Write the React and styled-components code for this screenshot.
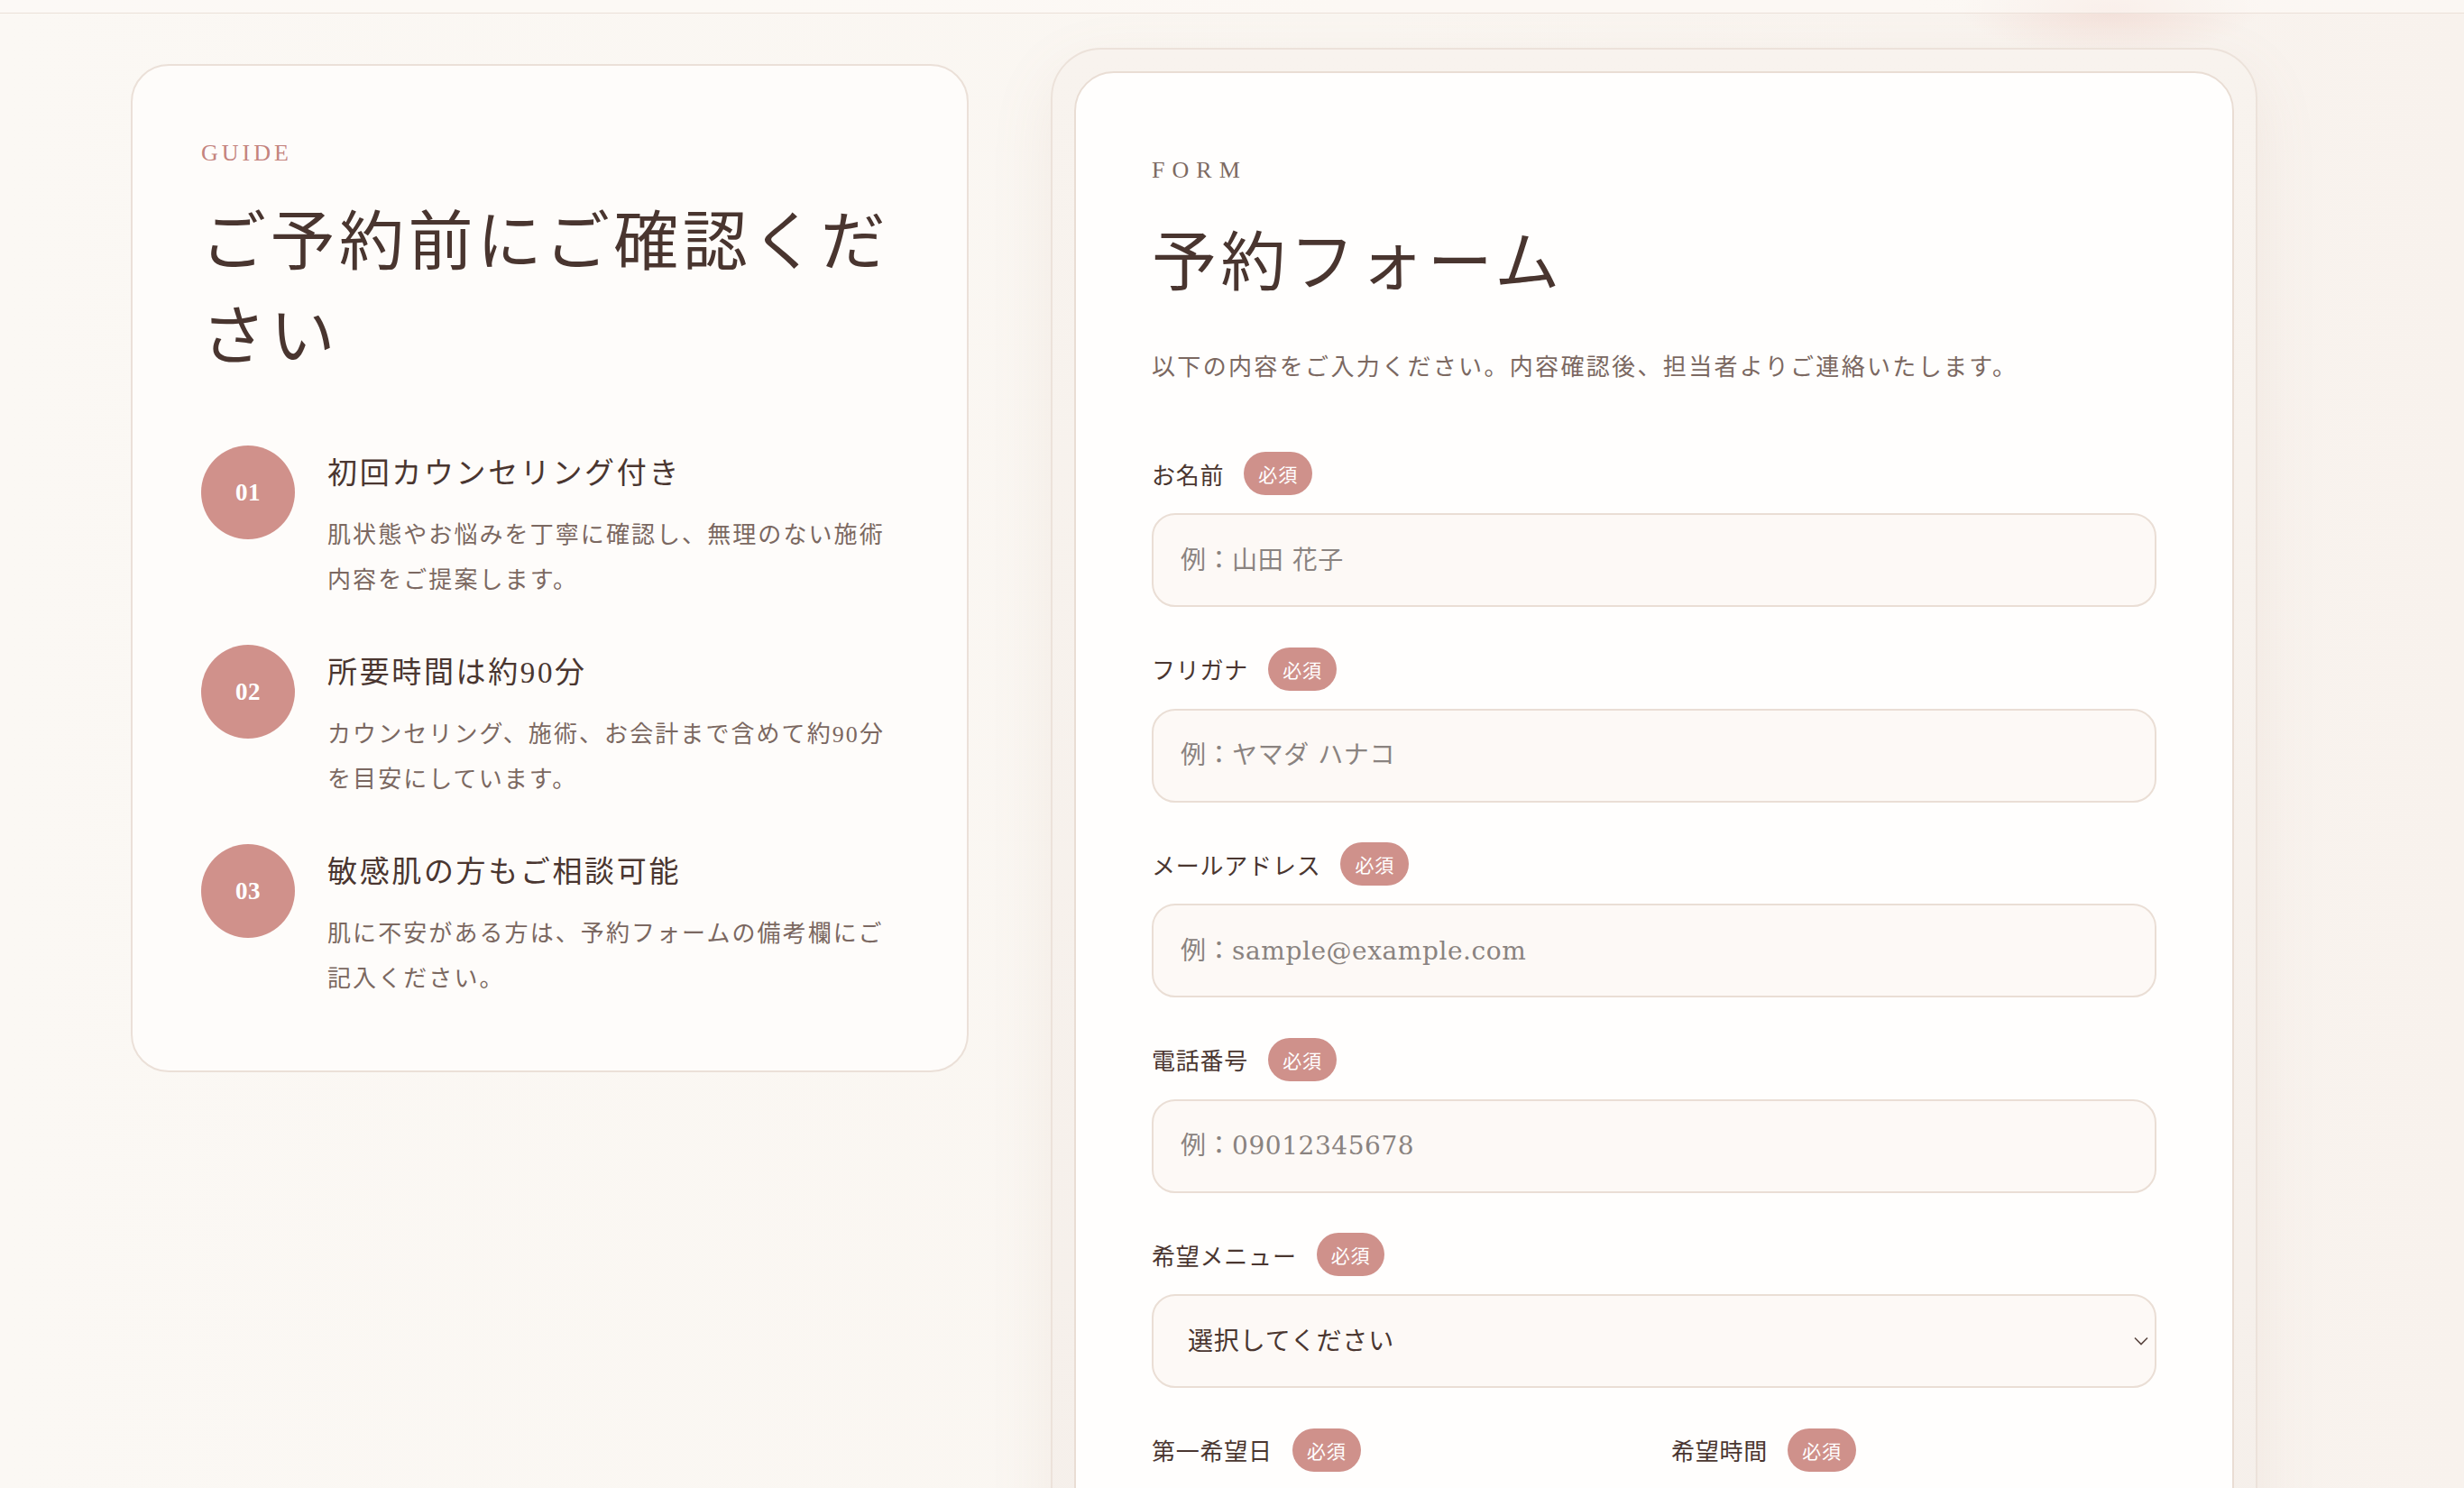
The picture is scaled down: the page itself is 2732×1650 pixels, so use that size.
import React from 'react';
import styled, { createGlobalStyle } from 'styled-components';

const GlobalStyle = createGlobalStyle`
  html, body {
    margin: 0;
    padding: 0;
  }

  * {
    box-sizing: border-box;
  }

  body {
    min-height: 100vh;
    background:
      radial-gradient(ellipse 220px 70px at 2340px 10px, rgba(238, 205, 196, 0.5), rgba(238, 205, 196, 0) 75%),
      linear-gradient(90deg, #fbf8f4 0%, #faf6f1 55%, #f8f2ed 100%);
    font-family: "Liberation Serif", "Noto Sans CJK JP", serif;
    color: #4a3630;
  }
`;

/** layout **/
const TopBar = styled.header`
  height: 15px;
  background: rgba(253, 250, 246, 0.6);
  border-bottom: 1px solid #ebe0d8;
`;

const Main = styled.main`
  display: grid;
  grid-template-columns: 929px 1338px;
  column-gap: 91px;
  align-items: start;
  padding: 38px 0 0 145px;
`;

/** guide card **/
const GuideCard = styled.section`
  margin-top: 18px;
  padding: 79px 76px 76px;
  background: #fefcfa;
  border: 2px solid #ebe0d8;
  border-radius: 42px;
`;

const Eyebrow = styled.p`
  margin: 0;
  font-family: "Liberation Serif", serif;
  font-size: 26px;
  line-height: 36px;
  letter-spacing: ${(p) => p.$spacing};
  color: ${(p) => p.$tone};
`;

const Heading = styled.h1`
  margin: ${(p) => p.$gap || '29px'} 0 0;
  font-size: 72px;
  font-weight: 400;
  line-height: 105px;
  letter-spacing: 0.062em;
  color: #49352f;
`;

const Steps = styled.ol`
  list-style: none;
  margin: 67px 0 0;
  padding: 0;
  display: flex;
  flex-direction: column;
  gap: 46px;
`;

const Step = styled.li`
  display: flex;
  align-items: flex-start;
  gap: 36px;
`;

const StepNum = styled.span`
  flex-shrink: 0;
  width: 104px;
  height: 104px;
  border-radius: 50%;
  background: #d0918b;
  color: #fff;
  display: flex;
  align-items: center;
  justify-content: center;
  font-size: 27px;
  font-weight: 700;
  letter-spacing: 0.02em;
`;

const StepBody = styled.div`
  flex: 1;
  min-width: 0;
`;

const StepTitle = styled.h3`
  margin: 0;
  font-size: 33px;
  font-weight: 400;
  line-height: 62px;
  letter-spacing: 0.08em;
  color: #4a3630;
`;

const StepText = styled.p`
  margin: 13px 0 0;
  font-size: 26px;
  line-height: 50px;
  letter-spacing: 0.08em;
  color: #7b6861;
`;

/** form **/
const FormFrame = styled.div`
  padding: 24px;
  background: linear-gradient(180deg, #f8f3ee 0%, #f5efea 100%);
  border: 2px solid #ece2da;
  border-radius: 56px;
  box-shadow: 0 24px 70px rgba(170, 128, 110, 0.1);
`;

const FormCard = styled.form`
  padding: 90px 84px 84px;
  background: #fffefd;
  border: 2px solid #e9ddd4;
  border-radius: 44px;
`;

const Lead = styled.p`
  margin: 38px 0 0;
  font-size: 26px;
  line-height: 50px;
  letter-spacing: 0.09em;
  color: #7b6861;
`;

const Fields = styled.div`
  margin-top: 68px;
  display: flex;
  flex-direction: column;
  gap: 44.5px;
`;

const Field = styled.div`
  display: flex;
  flex-direction: column;
  gap: 20px;
  min-width: 0;
`;

const LabelRow = styled.label`
  display: flex;
  align-items: center;
  gap: 22px;
  height: 48px;
  font-size: 26px;
  letter-spacing: 0.03em;
  color: #4a3630;
`;

const Badge = styled.span`
  display: inline-flex;
  align-items: center;
  height: 48px;
  padding: 0 16px;
  border-radius: 24px;
  background: #cf918b;
  color: #fff;
  font-size: 21px;
  letter-spacing: 0.04em;
`;

const TextInput = styled.input`
  width: 100%;
  height: 104px;
  padding: 0 30px;
  border: 2px solid #eaded5;
  border-radius: 26px;
  background: #fdf9f6;
  font-family: "DejaVu Serif", "Noto Sans CJK JP", serif;
  font-size: 28px;
  letter-spacing: 0.02em;
  color: #4a3630;
  outline: none;

  &::placeholder {
    color: #8a8380;
  }
`;

const SelectBox = styled.div`
  position: relative;
`;

const Select = styled(TextInput).attrs({ as: 'select' })`
  appearance: none;
  padding-left: 38px;
  font-family: "Liberation Serif", "Noto Sans CJK JP", serif;
  letter-spacing: 0.03em;
  color: #4a3630;
`;

const Chevron = styled.svg`
  position: absolute;
  right: 9px;
  top: 50%;
  width: 16px;
  height: 10px;
  transform: translateY(-50%);
  pointer-events: none;
`;

const Pair = styled.div`
  display: grid;
  grid-template-columns: 1fr 1fr;
  column-gap: 38px;
`;

const steps = [
  {
    no: '01',
    title: '初回カウンセリング付き',
    text: '肌状態やお悩みを丁寧に確認し、無理のない施術内容をご提案します。'
  },
  {
    no: '02',
    title: '所要時間は約90分',
    text: 'カウンセリング、施術、お会計まで含めて約90分を目安にしています。'
  },
  {
    no: '03',
    title: '敏感肌の方もご相談可能',
    text: '肌に不安がある方は、予約フォームの備考欄にご記入ください。'
  }
];

const textFields = [
  { id: 'name', label: 'お名前', type: 'text', placeholder: '例：山田 花子' },
  { id: 'kana', label: 'フリガナ', type: 'text', placeholder: '例：ヤマダ ハナコ' },
  { id: 'email', label: 'メールアドレス', type: 'email', placeholder: '例：sample@example.com' },
  { id: 'tel', label: '電話番号', type: 'tel', placeholder: '例：09012345678' }
];

const Label = ({ htmlFor, children }) => (
  <LabelRow htmlFor={htmlFor}>
    {children}
    <Badge>必須</Badge>
  </LabelRow>
);

const App = () => {
  return (
    <>
      <GlobalStyle/>
      <TopBar/>
      <Main>
        <GuideCard>
          <Eyebrow $tone="#c4837d" $spacing="0.155em">GUIDE</Eyebrow>
          <Heading>ご予約前にご確認ください</Heading>
          <Steps>
            {steps.map((s) => (
              <Step key={s.no}>
                <StepNum>{s.no}</StepNum>
                <StepBody>
                  <StepTitle>{s.title}</StepTitle>
                  <StepText>{s.text}</StepText>
                </StepBody>
              </Step>
            ))}
          </Steps>
        </GuideCard>

        <FormFrame>
          <FormCard onSubmit={(e) => e.preventDefault()}>
            <Eyebrow $tone="#7d6a62" $spacing="0.31em">FORM</Eyebrow>
            <Heading as="h2" $gap="33px">予約フォーム</Heading>
            <Lead>以下の内容をご入力ください。内容確認後、担当者よりご連絡いたします。</Lead>

            <Fields>
              {textFields.map((f) => (
                <Field key={f.id}>
                  <Label htmlFor={f.id}>{f.label}</Label>
                  <TextInput id={f.id} type={f.type} placeholder={f.placeholder}/>
                </Field>
              ))}

              <Field>
                <Label htmlFor="menu">希望メニュー</Label>
                <SelectBox>
                  <Select id="menu" defaultValue="">
                    <option value="">選択してください</option>
                    <option value="facial">フェイシャル</option>
                    <option value="body">ボディケア</option>
                  </Select>
                  <Chevron viewBox="0 0 16 10" fill="none">
                    <path d="M1 1.5 8 8.5 15 1.5" stroke="#5a4640" strokeWidth="1.6"/>
                  </Chevron>
                </SelectBox>
              </Field>

              <Pair>
                <Field>
                  <Label htmlFor="date">第一希望日</Label>
                  <TextInput id="date" type="text" placeholder="年 / 月 / 日"/>
                </Field>
                <Field>
                  <Label htmlFor="time">希望時間</Label>
                  <TextInput id="time" type="text" placeholder="--:--"/>
                </Field>
              </Pair>
            </Fields>
          </FormCard>
        </FormFrame>
      </Main>
    </>
  );
};

export default App;
